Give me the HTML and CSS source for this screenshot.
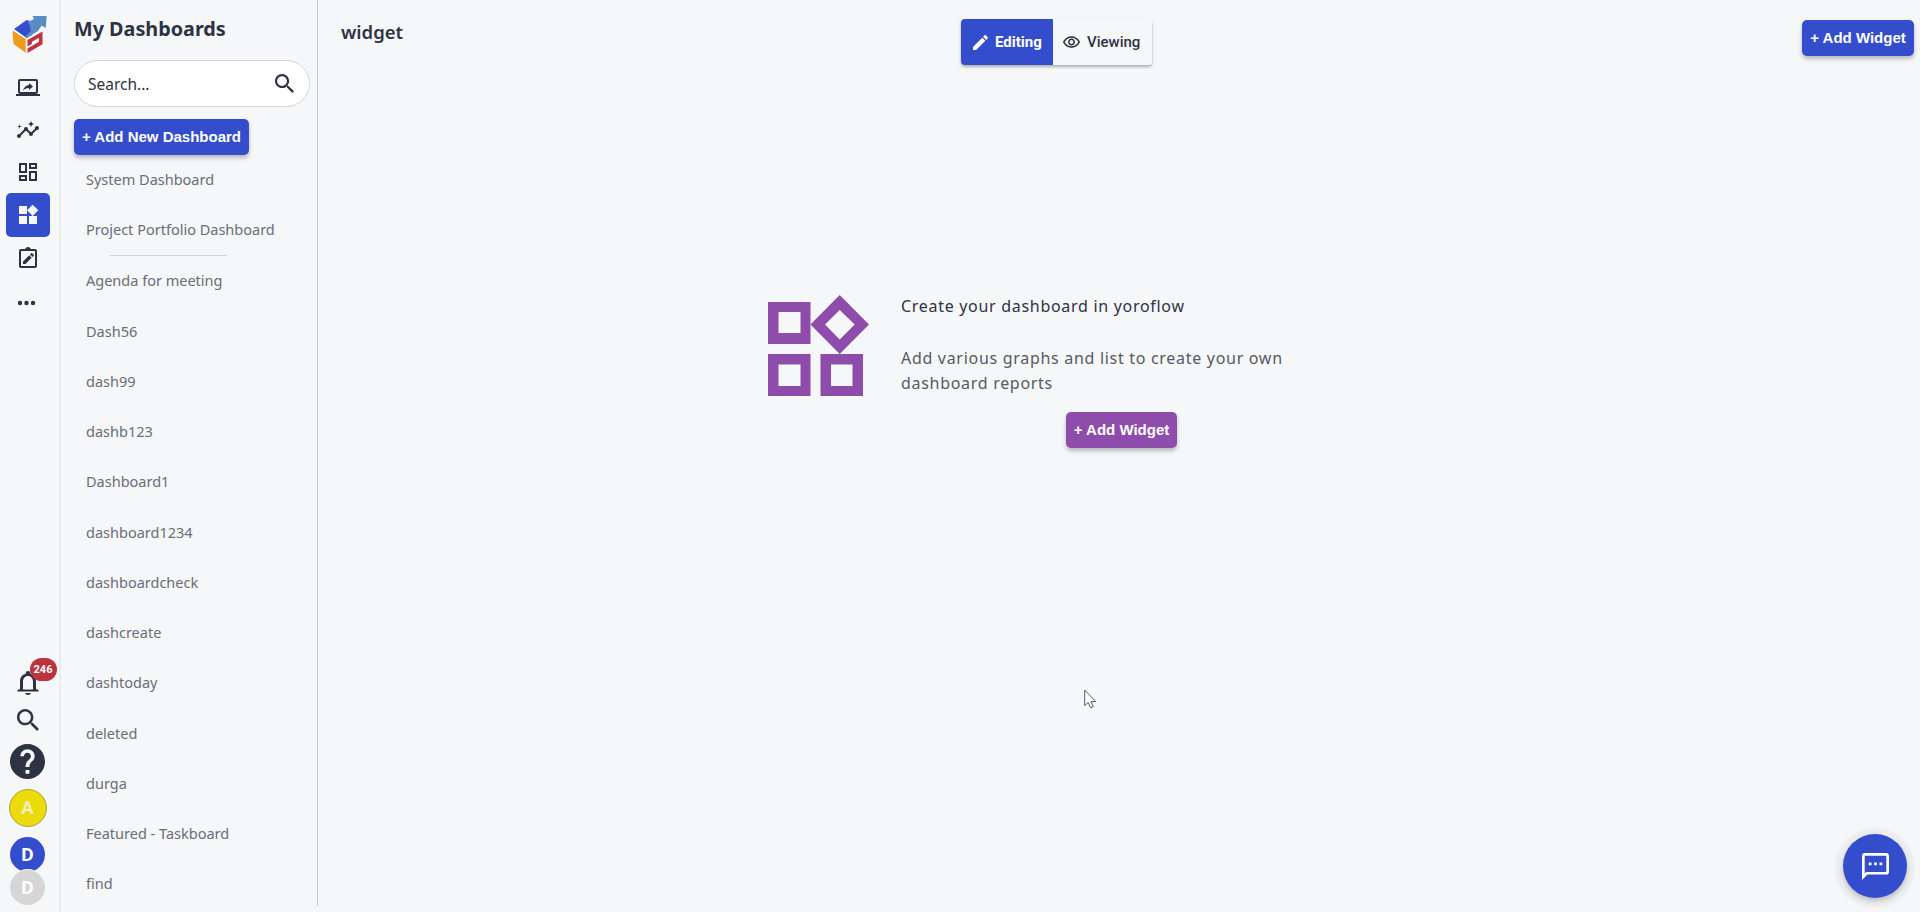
FILE: index.html
```html
<!DOCTYPE html>
<html lang="en">
<head>
    <meta charset="UTF-8">
    <meta name="viewport" content="width=device-width, initial-scale=1.0">
    <title>My Dashboards</title>
    <link rel="stylesheet" href="styles.css">
</head>
<body>
    <div class="app">
        <nav class="rail">
            <svg class="logo" viewBox="0 0 36 40">
                <path fill="#344dcc" d="M3 15 15.700 6l4 1.500 2 7L21 21l-5.300 3z"/>
                <path fill="#5a8cc4" d="M15.700 6l3.300 1 4-2-1.500-3h14.200l-1 12-4-2.500L27 17l-11.300 7-1-2 5-5-1-6z"/>
                <path fill="#f09a1c" d="M1.500 16.500l13.200 8.500v13.800L2.500 30z"/>
                <path fill="#bf3340" d="M16.500 26l15-8.500v12.700l-15 8.800v-4.500l11.500-6.700v-4l-7 4-.2 2.200-4.300 2.500z"/>
            </svg>
            <a class="rail-item"><svg viewBox="0 0 24 24"><path d="M20 18c1.100 0 1.990-.9 1.990-2L22 5c0-1.100-.9-2-2-2H4c-1.100 0-2 .9-2 2v11c0 1.100.9 2 2 2H0v2h24v-2h-4zM4 16V5h16v11H4zm9-1.900v-2c-2.800 0-4.600.8-6 2.700.6-2.700 2.100-5.300 6-5.900V7l4 3.600-4 3.500z"/></svg></a>
            <a class="rail-item"><svg viewBox="0 0 24 24"><path d="M21 8c-1.450 0-2.260 1.440-1.930 2.510l-3.550 3.560c-.3-.09-.74-.09-1.040 0l-2.550-2.550C12.270 10.450 11.460 9 10 9c-1.450 0-2.270 1.440-1.930 2.520l-4.560 4.550C2.440 15.740 1 16.550 1 18c0 1.100.9 2 2 2 1.450 0 2.260-1.440 1.930-2.510l4.550-4.560c.3.09.74.09 1.040 0l2.550 2.550C12.730 16.550 13.540 18 15 18c1.450 0 2.270-1.440 1.930-2.520l3.560-3.550C21.560 12.260 23 11.450 23 10c0-1.100-.9-2-2-2zM15 9l.94-2.070L18 6l-2.060-.93L15 3l-.92 2.070L12 6l2.080.93zM3.500 11 4 9l2-.5L4 8l-.5-2L3 8l-2 .5L3 9z"/></svg></a>
            <a class="rail-item"><svg viewBox="0 0 24 24"><path d="M19 5v2h-4V5h4M9 5v6H5V5h4m10 8v6h-4v-6h4M9 17v2H5v-2h4M21 3h-8v6h8V3zM11 3H3v10h8V3zm10 8h-8v10h8V11zm-10 4H3v6h8v-6z"/></svg></a>
            <a class="rail-item active"><svg viewBox="0 0 24 24"><path d="M13 13v8h8v-8h-8zM3 21h8v-8H3v8zM3 3v8h8V3H3zm13.660-1.310L11 7.340 16.660 13l5.660-5.660-5.660-5.650z"/></svg></a>
            <a class="rail-item"><svg viewBox="0 0 24 24"><path d="M19 3h-4.180C14.400 1.840 13.300 1 12 1s-2.400.84-2.820 2H5c-1.100 0-2 .9-2 2v15c0 1.100.9 2 2 2h14c1.100 0 2-.9 2-2V5c0-1.100-.9-2-2-2zm0 17H5V5h14v15zM7 15.500V18h2.500l6.200-6.200-2.500-2.500L7 15.500zm10.700-5.700c.3-.3.3-.7 0-1l-1.500-1.500c-.3-.3-.7-.3-1 0L14 8.500 16.500 11l1.200-1.200z"/></svg></a>
            <a class="rail-item dots"><svg viewBox="0 0 24 24"><circle cx="5" cy="12" r="2.200"/><circle cx="11.500" cy="12" r="2.200"/><circle cx="18" cy="12" r="2.200"/></svg></a>

            <div class="rail-bottom">
                <a class="bell">
                    <svg viewBox="0 0 24 26"><path d="M12 25c1.600 0 2.800-.9 2.800-2H9.200c0 1.100 1.200 2 2.800 2zm8-6V11.500c0-3.800-2-6.800-5.700-7.700v-.6C14.300 1.900 13.300 1 12 1S9.700 1.900 9.700 3.200v.6C6 4.700 4 7.700 4 11.500V19l-2.500 1v1.500h21V20L20 19zm-3 .5H7v-8C7 8.500 8.900 6 12 6s5 2.500 5 5.500v8z"/></svg>
                    <span class="badge">246</span>
                </a>
                <a class="rail-search"><svg viewBox="3 3 17.500 17.500"><path d="M15.500 14h-.79l-.28-.27C15.410 12.590 16 11.110 16 9.500 16 5.910 13.090 3 9.500 3S3 5.910 3 9.500 5.910 16 9.500 16c1.610 0 3.090-.59 4.230-1.570l.27.28v.79l5 4.990L20.490 19l-4.990-5zm-6 0C7.010 14 5 11.990 5 9.500S7.010 5 9.500 5 14 7.010 14 9.500 11.990 14 9.500 14z"/></svg></a>
                <a class="help"><svg viewBox="2 2 20 20"><path d="M12 2C6.480 2 2 6.480 2 12s4.480 10 10 10 10-4.480 10-10S17.520 2 12 2zm1.100 17h-2.200v-2.200h2.200V19zm2.100-7.700-.95.95c-.75.750-1.150 1.350-1.150 2.850h-2.200v-.5c0-1.100.45-2.100 1.150-2.850l1.300-1.300c.4-.35.6-.85.6-1.400 0-1.100-.9-2-2-2s-2 .9-2 2H7.900C7.900 6.800 9.700 5 12 5s4.100 1.800 4.100 4.050c0 .9-.35 1.700-.9 2.250z"/></svg></a>
                <span class="avatar yellow">A</span>
                <span class="avatar blue">D</span>
                <span class="avatar grey">D</span>
            </div>
        </nav>

        <aside class="sidebar">
            <h1>My Dashboards</h1>
            <div class="search">
                <span>Search...</span>
                <svg viewBox="3 3 17.500 17.500"><path d="M15.500 14h-.79l-.28-.27C15.410 12.590 16 11.110 16 9.500 16 5.910 13.090 3 9.500 3S3 5.910 3 9.500 5.910 16 9.500 16c1.610 0 3.090-.59 4.230-1.570l.27.28v.79l5 4.990L20.490 19l-4.990-5zm-6 0C7.010 14 5 11.990 5 9.500S7.010 5 9.500 5 14 7.010 14 9.500 11.990 14 9.500 14z"/></svg>
            </div>
            <button class="btn new-dashboard">+ Add New Dashboard</button>
            <ul class="list system">
                <li>System Dashboard</li>
                <li>Project Portfolio Dashboard</li>
            </ul>
            <hr>
            <ul class="list">
                <li>Agenda for meeting</li>
                <li>Dash56</li>
                <li>dash99</li>
                <li>dashb123</li>
                <li>Dashboard1</li>
                <li>dashboard1234</li>
                <li>dashboardcheck</li>
                <li>dashcreate</li>
                <li>dashtoday</li>
                <li>deleted</li>
                <li>durga</li>
                <li>Featured - Taskboard</li>
                <li>find</li>
            </ul>
        </aside>

        <main class="content">
            <header class="topbar">
                <h2>widget</h2>
                <div class="toggle">
                    <button class="editing"><svg viewBox="3 3 18 18"><path d="M3 17.250V21h3.750L17.810 9.940l-3.750-3.750L3 17.250zM20.710 7.040c.39-.39.39-1.020 0-1.410l-2.340-2.340c-.39-.39-1.020-.39-1.410 0l-1.830 1.830 3.750 3.750 1.830-1.830z"/></svg>Editing</button>
                    <button class="viewing"><svg viewBox="1 4 22 15"><path d="M12 6c3.790 0 7.170 2.130 8.820 5.500C19.170 14.870 15.790 17 12 17s-7.170-2.130-8.820-5.500C4.830 8.130 8.210 6 12 6m0-2C7 4 2.730 7.110 1 11.500 2.730 15.890 7 19 12 19s9.270-3.110 11-7.500C21.270 7.110 17 4 12 4zm0 5c1.380 0 2.500 1.120 2.500 2.500S13.380 14 12 14s-2.500-1.120-2.500-2.500S10.620 9 12 9m0-2c-2.480 0-4.500 2.020-4.500 4.500S9.520 16 12 16s4.500-2.020 4.500-4.500S14.480 7 12 7z"/></svg>Viewing</button>
                </div>
                <button class="btn add-widget">+ Add Widget</button>
            </header>

            <section class="empty">
                <svg class="empty-icon" viewBox="0 0 101 101">
                    <path fill="#8e4dab" fill-rule="evenodd" d="M0 7h42.500v42H0zM10.500 17v21h22V17zM0 59h42.500v42H0zM10.500 69.500v21.500h22V69.500zM52.500 59H95v42H52.500zM63 69.500v21.500h21.500V69.500zM71.700 0 101 29.500 71.700 59 42.500 29.500zM71.700 15 57 29.500 71.700 44.500 86.700 29.500z"/>
                </svg>
                <div class="empty-text">
                    <h3>Create your dashboard in yoroflow</h3>
                    <p>Add various graphs and list to create your own<br>dashboard reports</p>
                    <button class="btn purple">+ Add Widget</button>
                </div>
            </section>
        </main>
    </div>

    <button class="chat"><svg viewBox="2 2 20 20"><path d="M4 4h16v12H5.170L4 17.170V4m0-2c-1.100 0-1.990.9-1.990 2L2 22l4-4h14c1.100 0 2-.9 2-2V4c0-1.100-.9-2-2-2H4zm3 7h2v2H7V9zm4 0h2v2h-2V9zm4 0h2v2h-2V9z"/></svg></button>
    <svg class="cursor" viewBox="0 0 13 20"><path fill="#fff" stroke="#555b66" d="M.7 1v15.500l3.500-3 2.400 5.300 2.600-1.100-2.300-5.100h4.800z"/></svg>
</body>
</html>
```
FILE: styles.css
```css
* {
    box-sizing: border-box;
}

body {
    margin: 0;
    background-color: #f5f7f9;
    color: #2d3343;
    font-family: "Noto Sans", sans-serif;
    overflow: hidden;
}

svg {
    display: block;
    fill: currentColor;
}

button {
    border: none;
    padding: 0;
    font-family: "Liberation Sans", Arial, sans-serif;
}

h1, h2, h3, p, ul {
    margin: 0;
    padding: 0;
}

.app {
    display: flex;
    height: 912px;
}

/* left icon rail */
.rail {
    display: flex;
    flex-direction: column;
    width: 61px;
    height: 912px;
    padding: 14px 0 7px 6px;
    border-right: 2px solid #ebecef;
}

.logo {
    width: 36px; height: 40px;
    margin: 0 0 13px 5px;
}

.rail-item {
    display: flex;
    align-items: center;
    justify-content: center;
    width: 44px; height: 42px;
    border-radius: 5px;
}

.rail-item svg {
    width: 24px; height: 24px;
}

.rail-item.active {
    height: 44px;
    background-color: #344dcc;
    color: #f5f7f9;
}

.rail-item.dots {
    height: 48px;
    padding-right: 2px;
}

.rail-bottom {
    display: flex;
    flex-direction: column;
    align-items: center;
    width: 43px;
    margin-top: auto;
}

.bell {
    position: relative;
}

.bell svg {
    width: 24px; height: 26px;
}

.badge {
    position: absolute;
    left: 14px; top: -12px;
    width: 27px; height: 23px;
    border-radius: 12px;
    background-color: #bb333f;
    color: #fff;
    font: bold 11px/23px Roboto, sans-serif;
    text-align: center;
}

.rail-search {
    margin: 13px 0 13px;
}

.rail-search svg {
    width: 22px; height: 22px;
}

.help svg {
    width: 35px; height: 35px;
}

.avatar {
    width: 35px; height: 35px;
    border-radius: 50%;
    color: #fff;
    font: 700 19px/35px Roboto, sans-serif;
    text-align: center;
}

.yellow {
    width: 38px; height: 38px;
    margin: 10px 0;
    border: 1px solid #a9a23f;
    background-color: #ecdb0b;
    color: #f3eeb5;
}

.blue {
    background-color: #344dcc;
}

.grey {
    margin-top: -2px;
    background-color: #d6d6d6;
    box-shadow: 0 0 0 1px #f5f7f9;
}

/* dashboard list */
.sidebar {
    width: 257px; height: 906px;
    padding: 14px 7px 0 13px;
    border-right: 1px solid #c9cbd0;
    overflow: hidden;
}

.sidebar h1 {
    font-size: 19.800px;
    line-height: 30px;
    font-weight: 700;
    white-space: nowrap;
}

.search {
    display: flex;
    align-items: center;
    justify-content: space-between;
    width: 236px; height: 47px;
    margin: 16px 0 12px;
    padding: 0 15px 0 13px;
    border: 1px solid #d3d5de;
    border-radius: 24px;
    background-color: #fff;
    font-size: 15.500px;
}

.search svg {
    width: 19px; height: 19px;
}

.btn {
    height: 36px;
    padding-bottom: 2px;
    border-radius: 5px;
    background-color: #344dcc;
    box-shadow: 0 3px 4px rgba(0, 0, 0, 0.25);
    color: #fff;
    font-size: 15px;
    font-weight: bold;
    white-space: nowrap;
}

.new-dashboard {
    display: block;
    width: 175px;
}

.list {
    list-style: none;
    color: #6a6e79;
    font-size: 14.500px;
}

.list li {
    height: 50.240px;
    padding-left: 12px;
    line-height: 48px;
    white-space: nowrap;
}

.sidebar hr {
    width: 117px;
    margin: 0 0 0 36px;
    border: none;
    border-top: 1px solid #cfd1d5;
}

/* main area */
.content {
    flex: 1;
    padding: 19px 6px 0 23px;
}

.topbar {
    display: flex;
    align-items: flex-start;
}

.topbar h2 {
    width: 620px;
    font-size: 18.500px;
    line-height: 25px;
    font-weight: 600;
}

.toggle {
    display: flex;
    width: 191px; height: 46px;
    border-radius: 4px;
    overflow: hidden;
    box-shadow: 0 2px 3px rgba(0, 0, 0, 0.3);
}

.toggle button {
    display: flex;
    align-items: center;
    background-color: #f5f7f9;
    color: #2d3343;
    font: 500 15px Roboto, sans-serif;
}

.toggle .editing {
    width: 92px;
    padding-left: 12px;
    gap: 7px;
    background-color: #344dcc;
    color: #fff;
    font-weight: 700;
}

.editing svg {
    width: 15px; height: 15px;
}

.toggle .viewing {
    flex: 1;
    padding-left: 10px;
    gap: 7px;
}

.viewing svg {
    width: 17px; height: 12px;
}

.add-widget {
    width: 112px;
    margin: 1px 0 0 auto;
}

.empty {
    display: flex;
    margin: 230px 0 0 427px;
}

.empty-icon {
    width: 101px; height: 101px;
}

.empty-text {
    width: 400px;
    margin-left: 32px;
    font-size: 16px;
    letter-spacing: 0.700px;
}

.empty-text h3 {
    margin-top: -1px;
    margin-bottom: 27px;
    font-size: 16px;
    line-height: 25px;
    font-weight: 400;
}

.empty-text p {
    color: #555a66;
    line-height: 25px;
    white-space: nowrap;
}

.btn.purple {
    display: block;
    width: 111px;
    margin: 16px 0 0 165px;
    background-color: #8e4dab;
}

/* floating chat button */
.chat {
    position: absolute;
    left: 1843px; top: 834px;
    display: flex;
    align-items: center;
    justify-content: center;
    width: 64px; height: 64px;
    border-radius: 50%;
    background-color: #344dcc;
    color: #fff;
    box-shadow: 0 3px 5px rgba(0, 0, 0, 0.2), 0 2px 2px 8px rgba(0, 0, 0, 0.04);
}

.chat svg {
    width: 27px; height: 27px;
}

.cursor {
    position: absolute;
    left: 1084px; top: 689px;
    width: 13px; height: 20px;
}
```
